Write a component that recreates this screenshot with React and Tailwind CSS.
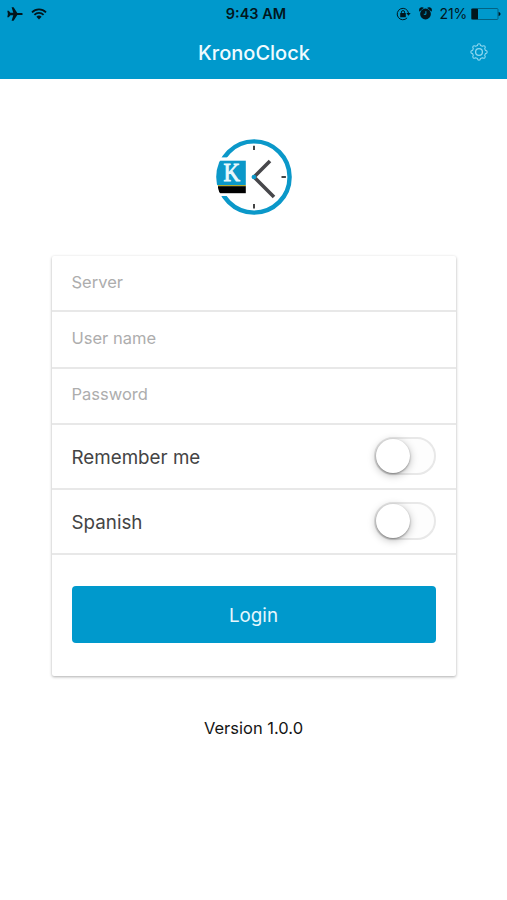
import { useState } from 'react';

const AirplaneIcon = () => (
  <svg width="16" height="14" viewBox="0 0 16 14" fill="#02161d">
    <path d="M15.8 7c0 .7-.7 1.1-1.6 1.1h-3.9L6.6 13.7H4.6L6.3 8.2H3.4L1.8 10.2H.3L.9 7 .3 3.8h1.5l1.6 2h2.9L4.6.3h2l3.7 5.6h3.9c.9 0 1.6.4 1.6 1.1z" />
  </svg>
);

const WifiIcon = () => (
  <svg width="16" height="12" viewBox="0 0 16 12" fill="none" stroke="#02161d" strokeWidth="1.8">
    <path d="M1 4.3a10 10 0 0 1 14 0" />
    <path d="M3.4 6.8a6.5 6.5 0 0 1 9.2 0" />
    <path d="M5.4 8.8a3.8 3.8 0 0 1 5.2 0L8 11.6z" fill="#02161d" stroke="none" />
  </svg>
);

const RotationLockIcon = () => (
  <svg width="15" height="14" viewBox="0 0 15 14" fill="none" stroke="#02161d" strokeWidth="1">
    <path d="M11.1 10.9A5.7 5.7 0 1 1 12.5 6" />
    <path d="M10.3 5.9h4.4l-2.2 2.9z" fill="#02161d" stroke="none" />
    <rect x="4.2" y="6" width="5.6" height="4.2" rx=".5" fill="#02161d" stroke="none" />
    <path d="M5.4 6.4V5.2a1.6 1.6 0 0 1 3.2 0v1.2" />
  </svg>
);

const AlarmIcon = () => (
  <svg width="13" height="13" viewBox="0 0 13 13">
    <circle cx="6.5" cy="7" r="5.4" fill="#02161d" />
    <path d="M.5 4.2A2.6 2.6 0 0 1 4.4 1zM12.5 4.2A2.6 2.6 0 0 0 8.6 1z" fill="#02161d" stroke="#02161d" strokeWidth=".6" />
    <path d="M6.9 4.2v3.1H4.8" fill="none" stroke="#0099cc" strokeWidth="1" />
  </svg>
);

const BatteryIcon = () => (
  <svg width="30" height="12" viewBox="0 0 30 12">
    <rect x=".5" y=".5" width="26.5" height="11" rx="1" fill="none" stroke="#036282" strokeWidth="1" />
    <rect x=".5" y=".8" width="6.5" height="10.4" rx=".5" fill="#02161d" />
    <path d="M27.6 4c1.2.2 1.9 1 1.9 2s-.7 1.8-1.9 2z" fill="#02161d" />
  </svg>
);

const GearIcon = () => (
  <svg width="18" height="18" viewBox="0 0 18 18" fill="none" stroke="#8fd8f0" strokeWidth="1.1" strokeLinejoin="round">
    <path d="M7.4 2.6Q7.6.8 9 .8t1.6 1.8l1.8.7q1.4-1.1 2.4-.1t-.1 2.4l.7 1.8q1.8.2 1.8 1.6t-1.8 1.6l-.7 1.8q1.1 1.4.1 2.4t-2.4-.1l-1.8.7q-.2 1.8-1.6 1.8t-1.6-1.8l-1.8-.7q-1.4 1.1-2.4.1t.1-2.4l-.7-1.8Q.8 10.4.8 9t1.8-1.6l.7-1.8q-1.1-1.4-.1-2.4t2.4.1z" />
    <circle cx="9" cy="9" r="3.4" strokeWidth="1.3" />
  </svg>
);

const Logo = () => (
  <svg width="76" height="76" viewBox="0 0 76 76">
    <defs>
      <clipPath id="face">
        <circle cx="38" cy="38" r="37.8" />
      </clipPath>
    </defs>
    <circle cx="38" cy="38" r="35.6" fill="#fff" stroke="#0b98c9" strokeWidth="4.4" />
    <rect x="0" y="18.4" width="20" height="38.6" fill="#fff" />
    <g clipPath="url(#face)">
      <rect x="0" y="21.7" width="29.8" height="24.6" fill="#0b98c9" />
      <rect x="2" y="46" width="27.8" height="1.4" fill="#b5ad2e" />
      <rect x="2" y="47.2" width="27.8" height="7" fill="#000" />
    </g>
    <text x="7.4" y="42.2" fill="#e9f8fd" stroke="#e9f8fd" strokeWidth=".9" fontSize="26" textLength="16.5" lengthAdjust="spacingAndGlyphs" fontFamily="Liberation Serif, serif">K</text>
    <path d="M38 6.7v4.4M38 65v4.4M65.5 38h4.4" stroke="#444" strokeWidth="2" />
    <path d="M54 22L38 38l20 20" fill="none" stroke="#47474b" strokeWidth="3.6" />
    <circle cx="38" cy="38" r="2.3" fill="#0b98c9" />
  </svg>
);

const Toggle = ({ checked, onChange, label }) => (
  <button
    type="button"
    role="switch"
    aria-checked={checked}
    aria-label={label}
    onClick={() => onChange(!checked)}
    className={`flex h-[38px] w-[62px] items-center rounded-full border-2 border-[#e8e8e8] ${
      checked ? 'justify-end bg-[#0099cc]' : 'justify-start bg-[#fdfdfd]'
    }`}
  >
    <span className="h-[34px] w-[34px] rounded-full bg-white shadow-[0_2px_8px_rgba(0,0,0,0.28),0_1px_2px_rgba(0,0,0,0.35)]" />
  </button>
);

const fields = [
  { name: 'server', placeholder: 'Server', type: 'text' },
  { name: 'user', placeholder: 'User name', type: 'text' },
  { name: 'password', placeholder: 'Password', type: 'password' },
];

const App = () => {
  const [values, setValues] = useState({ server: '', user: '', password: '' });
  const [remember, setRemember] = useState(false);
  const [spanish, setSpanish] = useState(false);

  return (
    <div className="flex h-[900px] w-full flex-col items-center bg-white font-[Inter,sans-serif]">
      <header className="h-[79px] w-full shrink-0 bg-[#0099cc]">
        <div className="grid h-[27px] grid-cols-3 items-center pl-[7px] pr-[6px] text-[#02161d]">
          <div className="flex items-center gap-2">
            <AirplaneIcon />
            <WifiIcon />
          </div>
          <span className="pt-px pl-1 text-center text-[14.5px] font-semibold">9:43 AM</span>
          <div className="flex items-center justify-end">
            <RotationLockIcon />
            <span className="ml-2 mr-2"><AlarmIcon /></span>
            <span className="mr-1 text-[14px] tracking-[-0.2px]">21%</span>
            <BatteryIcon />
          </div>
        </div>
        <div className="grid h-[50px] grid-cols-[1fr_auto_1fr] items-center pr-[19px] pl-[20px]">
          <span />
          <h1 className="pt-[2px] text-[20px] font-[450] text-[#f0fbff]">KronoClock</h1>
          <button type="button" aria-label="Settings" className="justify-self-end">
            <GearIcon />
          </button>
        </div>
      </header>

      <div className="mt-[60px]">
        <Logo />
      </div>

      <form
        onSubmit={(e) => e.preventDefault()}
        className="mt-[41px] h-[420px] w-[404px] rounded-xs bg-white shadow-[0_1px_3px_rgba(0,0,0,0.32)]"
      >
        {fields.map((field) => (
          <div key={field.name} className="flex h-[56.3px] items-center border-b-2 border-[#e8e8e8] px-5 pb-[2px]">
            <input
              type={field.type}
              value={values[field.name]}
              placeholder={field.placeholder}
              onChange={(e) => setValues({ ...values, [field.name]: e.target.value })}
              className="w-full text-[16.5px] text-[#444] placeholder-[#adadad] outline-none"
            />
          </div>
        ))}
        <div className="flex h-[65px] items-center justify-between border-b-2 border-[#e8e8e8] px-5 pb-px">
          <span className="pt-1 text-[18.8px] text-[#444]">Remember me</span>
          <Toggle checked={remember} onChange={setRemember} label="Remember me" />
        </div>
        <div className="flex h-[65px] items-center justify-between border-b-2 border-[#e8e8e8] px-5 pb-px">
          <span className="pt-1 text-[18.8px] text-[#444]">Spanish</span>
          <Toggle checked={spanish} onChange={setSpanish} label="Spanish" />
        </div>
        <div className="px-5 pt-[31px]">
          <button type="submit" className="h-[57px] w-full rounded bg-[#0099cc] pt-1 text-[18.8px] text-[#e6f7fd]">
            Login
          </button>
        </div>
      </form>

      <p className="mt-[40px] text-[16.5px] text-[#151515]">Version 1.0.0</p>
    </div>
  );
};

export default App;
